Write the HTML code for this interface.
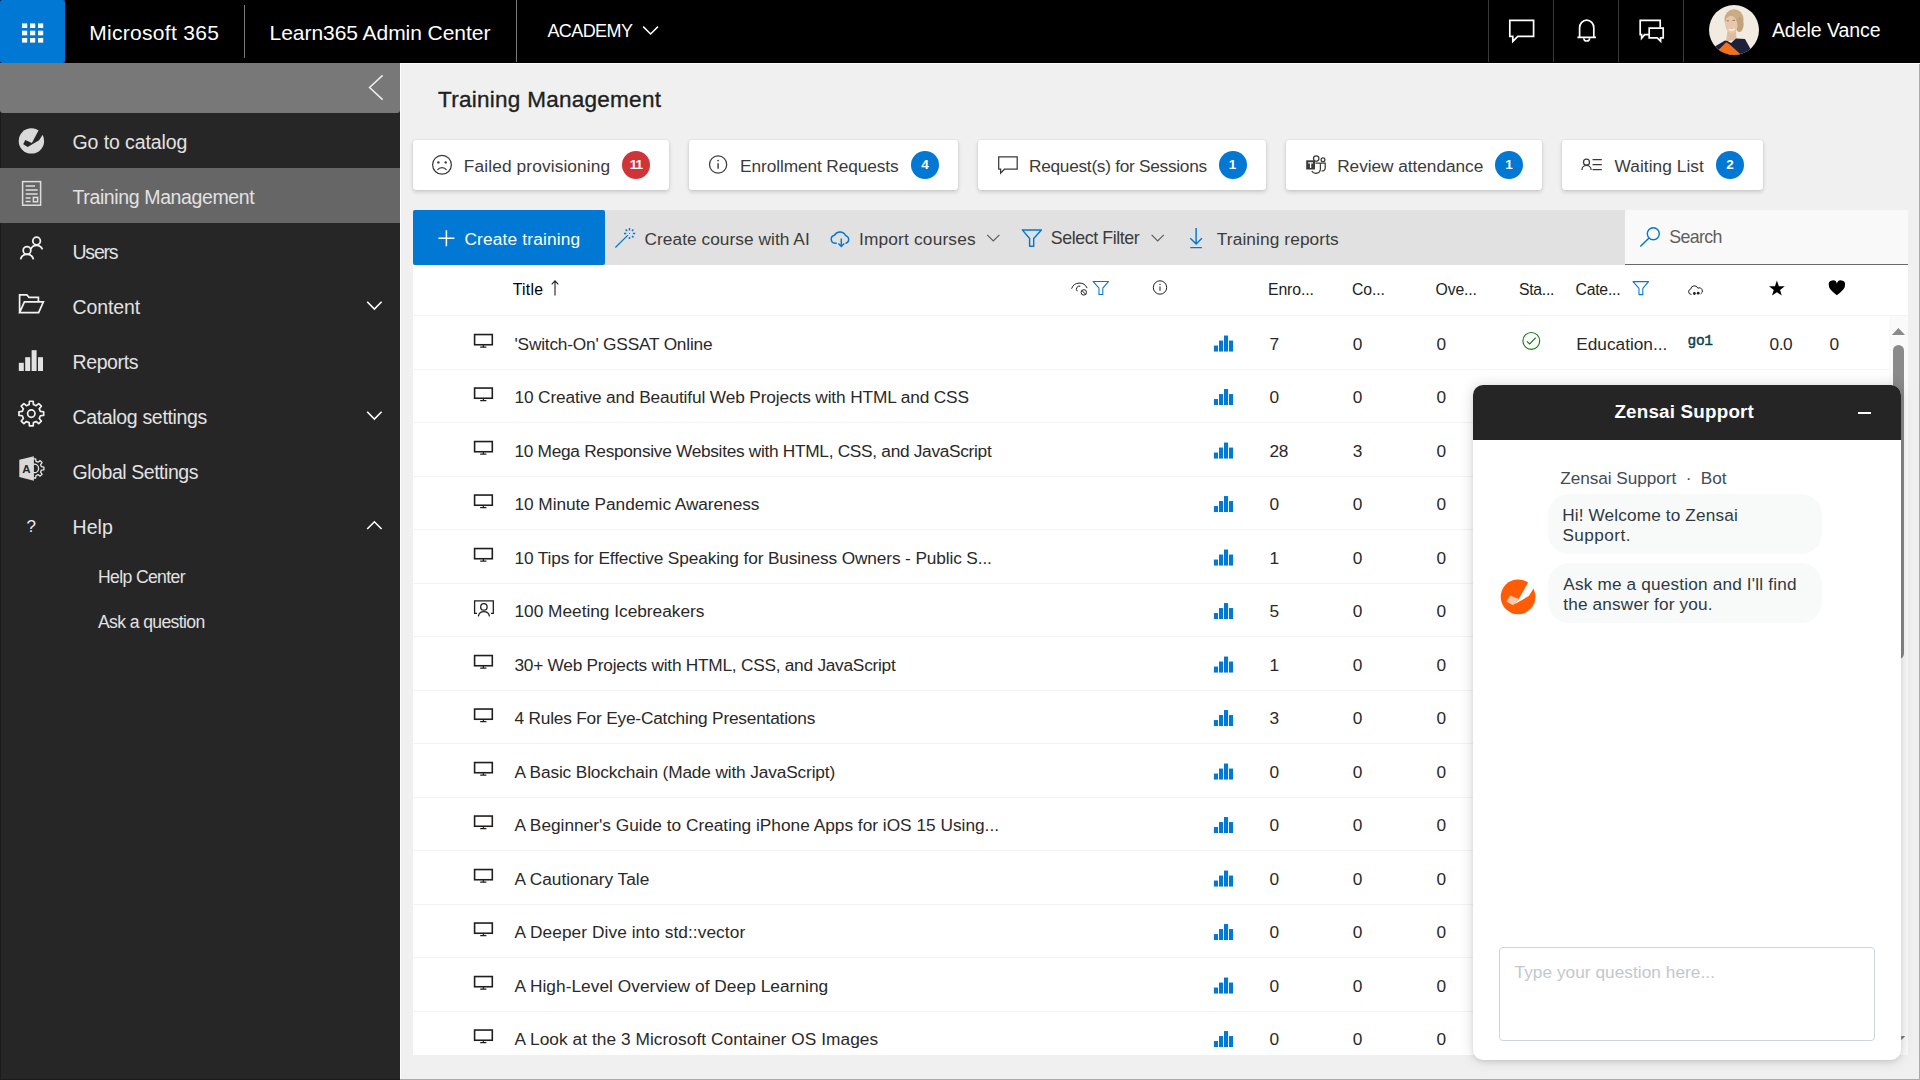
<!DOCTYPE html>
<html lang="en">
<head>
<meta charset="utf-8">
<title>Training Management - Learn365 Admin Center</title>
<style>
*{box-sizing:border-box;margin:0;padding:0}
html,body{width:1920px;height:1080px;overflow:hidden}
body{font-family:"Liberation Sans",sans-serif;background:#efefef;color:#201f1e;position:relative}
.abs{position:absolute}
svg{display:block;overflow:visible}
/* ---------- top bar ---------- */
#top{z-index:5;position:absolute;left:0;top:0;width:1920px;height:62.5px;background:#000;color:#fff}
#waffle{position:absolute;left:0;top:0;width:65px;height:62.5px;background:#0078d4;border-radius:2px}
#top .t{position:absolute;white-space:nowrap;color:#fff;line-height:1}
#top .dv{position:absolute;top:5px;width:1.3px;height:53px;background:#7a7a7a}
#top .dv2{position:absolute;top:0;width:1px;height:62px;background:#3a3a3a}
#tbl{position:absolute;left:413px;top:264.5px;width:1495px;height:790px;background:#fff}
.th{position:absolute;top:279.5px;font-size:15.8px;line-height:20px;color:#201f1e;white-space:nowrap;letter-spacing:-0.3px}
.hr{position:absolute;left:413px;width:1476px;height:1px;background:#f3f3f3}
.row{position:absolute;left:0;width:1920px;height:53.5px}
.row span{position:absolute;top:18.4px;font-size:17.3px;line-height:20px;color:#2a2928;white-space:nowrap;letter-spacing:-0.45px}
.row .rt{left:514.5px}
#sbt{position:absolute;left:1889px;top:315.5px;width:19px;height:739px;background:#fafafa}
#sbthumb{position:absolute;left:1893px;top:345px;width:11px;height:313.5px;border-radius:5.5px;background:#8a8a8a}
#chat{position:absolute;left:1473px;top:384.7px;width:428px;height:675.3px;background:#fff;border-radius:10px;box-shadow:0 0 14px rgba(0,0,0,.16),0 2px 4px rgba(0,0,0,.08);overflow:hidden}
#chh{position:absolute;left:0;top:0;width:428px;height:55.2px;background:#252525}
.ctx{position:absolute;font-size:17.2px;line-height:20px;color:#2f3941;white-space:nowrap}
.bub{position:absolute;left:1548.3px;width:273.4px;background:#f8f9f9;border-radius:21px}
#chin{position:absolute;left:1499.3px;top:946.9px;width:375.8px;height:94.6px;border:1.2px solid #cfd6da;border-radius:4px;background:#fff}
/* ---------- sidebar ---------- */
#side{position:absolute;left:0;top:0;width:400px;height:1080px;background:#262626;color:#fff;box-shadow:inset 1px 0 0 #1b1b1b,inset 0 -1px 0 #1b1b1b}
#collapse{position:absolute;left:0;top:62.5px;width:399.5px;height:50.2px;background:#787878;border-radius:0 0 3px 3px}
.nav{position:absolute;left:0;width:400px;height:55px}
.nav.sel{background:#666}
.nav .lbl{position:absolute;left:72.5px;top:2px;line-height:55px;font-size:19.5px;color:#e2e2e2;white-space:nowrap;letter-spacing:-0.55px}
.nav .ico{position:absolute;left:0;top:0}
.sub{position:absolute;left:98px;font-size:17.6px;color:#e2e2e2;white-space:nowrap;letter-spacing:-0.45px;line-height:1}
.nav .q{position:absolute;left:26.5px;top:1px;line-height:55px;font-size:17px;color:#ededed}
/* ---------- main ---------- */
#main{position:absolute;left:400px;top:0;width:1520px;height:1080px;background:#f0f0f0}
#main .edge{position:absolute;background:#fcfcfc}
#m{position:absolute;left:-400px;top:0;width:1920px;height:1080px} /* page-coordinate layer */
#title{position:absolute;left:438px;top:86.9px;font-size:22.5px;line-height:26px;color:#201f1e;-webkit-text-stroke:0.35px #201f1e;white-space:nowrap;letter-spacing:-0.5px}
.card{position:absolute;top:140px;height:50px;background:#fff;border-radius:3px;box-shadow:0 2px 4px rgba(0,0,0,.16),0 0 2px rgba(0,0,0,.10)}
.card .ct{position:absolute;top:15.6px;font-size:17.3px;line-height:20px;color:#3c3b39;white-space:nowrap;letter-spacing:-0.45px}
.badge{position:absolute;top:11px;width:28px;height:28px;border-radius:50%;background:#0078d4;color:#fff;font-weight:bold;font-size:13.5px;line-height:28px;text-align:center}
.badge.red{background:#d13438;letter-spacing:-0.8px}
#tb{position:absolute;left:413px;top:210px;width:1212px;height:54.5px;background:#e1e1e1}
#create{position:absolute;left:413px;top:210px;width:192px;height:54.5px;background:#0078d4;border-radius:2px}
.tt{position:absolute;top:228.5px;font-size:17.3px;line-height:20px;color:#3c3b39;white-space:nowrap;letter-spacing:-0.45px}
#search{position:absolute;left:1625px;top:210px;width:283px;height:55px;background:#f9f9f9;border-radius:2px 2px 0 0;border-bottom:1.5px solid #686868}
</style>
</head>
<body>
<!-- TOP BAR -->
<div id="top">
  <div id="waffle">
    <svg class="abs" style="left:22px;top:23px" width="22" height="20" viewBox="0 0 22 20" fill="#fff">
      <rect x="0" y="0.4" width="5.2" height="4.6"/><rect x="8" y="0.4" width="5.2" height="4.6"/><rect x="16" y="0.4" width="5.2" height="4.6"/>
      <rect x="0" y="7.7" width="5.2" height="4.6"/><rect x="8" y="7.7" width="5.2" height="4.6"/><rect x="16" y="7.7" width="5.2" height="4.6"/>
      <rect x="0" y="15" width="5.2" height="4.6"/><rect x="8" y="15" width="5.2" height="4.6"/><rect x="16" y="15" width="5.2" height="4.6"/>
    </svg>
  </div>
  <div class="t" id="t-ms" style="left:89.22px;top:21.5px;font-size:21px;letter-spacing:0.300px">Microsoft 365</div>
  <div class="dv" style="left:244px"></div>
  <div class="t" id="t-l365" style="left:269.59px;top:21.5px;font-size:21px;letter-spacing:-0.051px">Learn365 Admin Center</div>
  <div class="dv" style="left:516px;top:0;height:62px"></div>
  <div class="dv2" style="left:1488px"></div><div class="dv2" style="left:1553.2px"></div><div class="dv2" style="left:1618.2px"></div><div class="dv2" style="left:1683px"></div>
  <div class="t" id="t-av" style="left:1771.92px;top:21.3px;font-size:19.5px;letter-spacing:-0.040px">Adele Vance</div>
  <svg class="abs" style="left:0;top:0" width="1920" height="63" viewBox="0 0 1920 63" fill="none" stroke="#fff" stroke-width="1.7">
    <path d="M643.2 26.6l7.4 7.4 7.4-7.4" stroke-width="1.5"/>
    <!-- comment -->
    <path d="M1509.8 20.4h23.8v16h-15.8l-5 5v-5h-3z"/>
    <!-- bell -->
    <path d="M1577.4 37.4h18.6M1579.6 37.4v-9.6a7 7.6 0 0 1 14.2 0v9.6" />
    <path d="M1583.8 38.2a2.9 2.9 0 0 0 5.8 0" stroke-width="1.5"/>
    <!-- feedback -->
    <path d="M1649 34.6h-4.4l-3 3.6v-3.6h-1.4v-14.2h20v7"/>
    <path d="M1649.2 28.2h14v9.6h-2.6v3.4l-3.4-3.4h-8z"/>
  </svg>
  <!-- avatar -->
  <svg class="abs" style="left:1709px;top:5px" width="50" height="50" viewBox="0 0 50 50">
    <defs><clipPath id="avc"><circle cx="25" cy="25" r="25"/></clipPath></defs>
    <g clip-path="url(#avc)">
      <rect width="50" height="50" fill="#f2ebe1"/>
      <ellipse cx="25" cy="14.600" rx="9.600" ry="10.400" fill="#c9ab84"/>
      <ellipse cx="30.400" cy="19.500" rx="4.200" ry="7.600" fill="#c2a27c"/>
      <path d="M18.500 26h8.500l0.500 8.500-10.500 2z" fill="#dfbba0"/>
      <ellipse cx="22.300" cy="19.600" rx="6.200" ry="8.800" fill="#e8c7ad" transform="rotate(-8 22.300 19.600)"/>
      <path d="M20 24.300q2.800 2 5.600-0.600" stroke="#fbf4ee" stroke-width="1.300" fill="none"/>
      <path d="M17.600 15.800h2.400M23.400 15.400h2.600" stroke="#8c6f58" stroke-width="0.900"/>
      <path d="M5 42l11-6.500 2.500 0.500 3.500 2 5-4.500 9 0.500 5 9 2 8H0z" fill="#1e2238"/>
      <path d="M9.500 45l7.700-7.800 3 1.800 11 10-1 2H12z" fill="#f3701f"/>
    </g>
  </svg>
  <div class="t" id="t-ac" style="left:547.45px;top:22px;font-size:18px;letter-spacing:-0.594px">ACADEMY</div>
</div>

<!-- SIDEBAR -->
<div id="side">
  <div id="collapse"></div>
  <svg class="abs" style="left:0;top:0" width="400" height="1080" viewBox="0 0 400 1080" fill="none">
    <!-- collapse chevron -->
    <path d="M382.6 75.4 L369.6 87.5 L382.6 99.6" stroke="#ececec" stroke-width="1.6"/>
  </svg>
  <div class="nav" style="top:112.5px"><div class="lbl" id="n1" style=";letter-spacing:-0.101px">Go to catalog</div></div>
  <div class="nav sel" style="top:167.5px"><div class="lbl" id="n2" style=";letter-spacing:-0.376px">Training Management</div></div>
  <div class="nav" style="top:222.5px"><div class="lbl" id="n3" style=";letter-spacing:-1.219px">Users</div></div>
  <div class="nav" style="top:277.5px"><div class="lbl" id="n4" style=";letter-spacing:-0.106px">Content</div></div>
  <div class="nav" style="top:332.5px"><div class="lbl" id="n5" style=";letter-spacing:-0.394px">Reports</div></div>
  <div class="nav" style="top:387.5px"><div class="lbl" id="n6" style=";letter-spacing:-0.334px">Catalog settings</div></div>
  <div class="nav" style="top:442.5px"><div class="lbl" id="n7" style=";letter-spacing:-0.445px">Global Settings</div></div>
  <div class="nav" style="top:497.5px"><div class="lbl" id="n8" style=";letter-spacing:0.061px">Help</div><div class="q" id="nq">?</div></div>
  <div class="sub" id="s1" style="top:568.6px;letter-spacing:-0.636px">Help Center</div>
  <div class="sub" id="s2" style="top:613.6px;letter-spacing:-0.625px">Ask a question</div>
  <svg class="abs" id="sideicons" style="left:0;top:0" width="400" height="1080" viewBox="0 0 400 1080" fill="none">
    <!-- go to catalog -->
    <circle cx="31.4" cy="140.9" r="12.7" fill="#dadada"/>
    <path d="M40.8 126 L38.6 130.3 L31.9 142.9 L25.3 139.9 L23.2 144.3 L27.7 146.9 L39.1 140.3 L42.5 135.1 L45.5 130.5Z" fill="#262626"/>
    <!-- training management -->
    <g stroke="#dedede" stroke-width="1.5">
      <rect x="22.6" y="181.6" width="18" height="23.6"/>
      <path d="M25.6 186h9.4M25.6 190h12M25.6 194h12M25.6 198h5M25.6 201.6h5"/>
      <rect x="33.4" y="197.4" width="4.2" height="4.4"/>
    </g>
    <!-- users -->
    <g stroke="#f2f2f2" stroke-width="1.75">
      <circle cx="36.6" cy="241" r="3.8"/>
      <path d="M30.8 249.2a6.3 6.3 0 0 1 11.6 0.2"/>
      <circle cx="27" cy="250.4" r="3.8"/>
      <path d="M20.6 259.4a6.6 6.6 0 0 1 12.8 0"/>
    </g>
    <!-- content folder -->
    <path d="M19.6 312.6V294.8h7.2l2.2 2.6h9.4v4.4M19.6 312.6l4.8-10.8h19l-4.8 10.8z" stroke="#f2f2f2" stroke-width="1.7" stroke-linejoin="miter"/>
    <!-- reports -->
    <g fill="#e2e2e2">
      <rect x="18.8" y="362.8" width="5" height="8.2"/><rect x="25.2" y="357.2" width="5" height="13.8"/>
      <rect x="31.6" y="350.2" width="5" height="20.8"/><rect x="38" y="357.2" width="5" height="13.8"/>
    </g>
    <!-- catalog settings gear -->
    <path d="M40.34 411.43 L43.66 411.74 L43.66 415.46 L40.34 415.77 L39.23 418.46 L41.35 421.03 L38.73 423.65 L36.16 421.53 L33.47 422.64 L33.16 425.96 L29.44 425.96 L29.13 422.64 L26.44 421.53 L23.87 423.65 L21.25 421.03 L23.37 418.46 L22.26 415.77 L18.94 415.46 L18.94 411.74 L22.26 411.43 L23.37 408.74 L21.25 406.17 L23.87 403.55 L26.44 405.67 L29.13 404.56 L29.44 401.24 L33.16 401.24 L33.47 404.56 L36.16 405.67 L38.73 403.55 L41.35 406.17 L39.23 408.74Z" stroke="#f2f2f2" stroke-width="1.7" stroke-linejoin="round"/>
    <circle cx="31.3" cy="413.6" r="3.7" stroke="#f2f2f2" stroke-width="1.7"/>
    <!-- global settings -->
    <path d="M41.40 466.70 L43.90 467.03 L43.90 469.77 L41.40 470.10 L40.52 472.21 L42.06 474.22 L40.12 476.16 L38.11 474.62 L36.00 475.50 L35.67 478.00 L32.93 478.00 L32.60 475.50 L30.49 474.62 L28.48 476.16 L26.54 474.22 L28.08 472.21 L27.20 470.10 L24.70 469.77 L24.70 467.03 L27.20 466.70 L28.08 464.59 L26.54 462.58 L28.48 460.64 L30.49 462.18 L32.60 461.30 L32.93 458.80 L35.67 458.80 L36.00 461.30 L38.11 462.18 L40.12 460.64 L42.06 462.58 L40.52 464.59Z" stroke="#e8e8e8" stroke-width="1.3" stroke-linejoin="round"/>
    <circle cx="34.3" cy="468.4" r="4.3" stroke="#e8e8e8" stroke-width="1.3"/>
    <path d="M19.3 459.8 L33.9 456.2 V480.7 L19.3 477Z" fill="#d9d9d9"/>
    <text x="22.3" y="472.7" font-family="Liberation Sans, sans-serif" font-weight="bold" font-size="11.5" fill="#262626">A</text>
    <!-- nav chevrons -->
    <g stroke="#fff" stroke-width="1.6">
      <path d="M367.2 301.8l7.2 7.2 7.2-7.2"/>
      <path d="M367.2 411.8l7.2 7.2 7.2-7.2"/>
      <path d="M367.2 529l7.2-7.2 7.2 7.2"/>
    </g>
  </svg>
</div>

<!-- MAIN -->
<div id="main">
 <div class="edge" style="left:0;top:62.5px;width:1px;height:1018px"></div>
 <div class="edge" style="left:0;top:62.5px;width:1520px;height:1px"></div>
 <div class="edge" style="left:1519px;top:63.5px;width:1px;height:1017px;background:#aaa"></div>
 <div class="edge" style="left:0;top:1079px;width:1520px;height:1px;background:#aaa"></div>
 <div id="m">
  <div id="title" style=";letter-spacing:0.271px">Training Management</div>
  <!-- cards -->
  <div class="card" style="left:413px;width:256px"><div class="ct" id="c1" style="left:50.87px;letter-spacing:0.121px">Failed provisioning</div><div class="badge red" style="left:209px">11</div></div>
  <div class="card" style="left:689px;width:269px"><div class="ct" id="c2" style="left:51.05px;letter-spacing:-0.099px">Enrollment Requests</div><div class="badge" style="left:222px">4</div></div>
  <div class="card" style="left:978px;width:288px"><div class="ct" id="c3" style="left:51.04px;letter-spacing:-0.288px">Request(s) for Sessions</div><div class="badge" style="left:240.5px">1</div></div>
  <div class="card" style="left:1286px;width:256px"><div class="ct" id="c4" style="left:51.19px;letter-spacing:-0.056px">Review attendance</div><div class="badge" style="left:209px">1</div></div>
  <div class="card" style="left:1562px;width:201px"><div class="ct" id="c5" style="left:52.50px;letter-spacing:0.059px">Waiting List</div><div class="badge" style="left:154px">2</div></div>
  <!-- toolbar -->
  <div id="tb"></div>
  <div id="create"></div>
  <div class="tt" id="b1" style="left:464.42px;color:#fff;letter-spacing:0.168px">Create training</div>
  <div class="tt" id="b2" style="left:644.50px;letter-spacing:0.049px">Create course with AI</div>
  <div class="tt" id="b3" style="left:858.97px;letter-spacing:0.182px">Import courses</div>
  <div class="tt" id="b4" style="left:1050.73px;top:228px;font-size:17.8px;letter-spacing:-0.401px">Select Filter</div>
  <div class="tt" id="b5" style="left:1216.83px;letter-spacing:0.099px">Training reports</div>
  <div id="search"></div>
  <div class="tt" id="b6" style="left:1669.33px;top:227.2px;color:#605e5c;font-size:17.8px;letter-spacing:-0.647px">Search</div>
  <div id="tbl"></div>
  <div class="th" id="h1" style="left:512.74px;color:#000;letter-spacing:0.277px">Title</div>
  <div class="th" id="h2" style="left:1268.03px;letter-spacing:-0.112px">Enro...</div>
  <div class="th" id="h3" style="left:1351.99px;letter-spacing:-0.119px">Co...</div>
  <div class="th" id="h4" style="left:1435.56px;letter-spacing:-0.141px">Ove...</div>
  <div class="th" id="h5" style="left:1519.00px;letter-spacing:-0.297px">Sta...</div>
  <div class="th" id="h6" style="left:1575.48px;letter-spacing:-0.230px">Cate...</div>
  <div class="hr" style="top:315px;width:1495px"></div>
  <div class="hr" style="top:369px"></div>
  <div class="hr" style="top:422px"></div>
  <div class="hr" style="top:476px"></div>
  <div class="hr" style="top:529px"></div>
  <div class="hr" style="top:583px"></div>
  <div class="hr" style="top:636px"></div>
  <div class="hr" style="top:690px"></div>
  <div class="hr" style="top:743px"></div>
  <div class="hr" style="top:797px"></div>
  <div class="hr" style="top:850px"></div>
  <div class="hr" style="top:904px"></div>
  <div class="hr" style="top:957px"></div>
  <div class="hr" style="top:1011px"></div>
  <div class="row" style="top:315.15px"><span class="rt" id="r1" style=";letter-spacing:-0.209px">'Switch-On' GSSAT Online</span><span class="n" style="left:1269.5px">7</span><span class="n" style="left:1352.8px">0</span><span class="n" style="left:1436.5px">0</span></div>
  <div class="row" style="top:368.65px"><span class="rt" id="r2" style=";letter-spacing:-0.136px">10 Creative and Beautiful Web Projects with HTML and CSS</span><span class="n" style="left:1269.5px">0</span><span class="n" style="left:1352.8px">0</span><span class="n" style="left:1436.5px">0</span></div>
  <div class="row" style="top:422.15px"><span class="rt" id="r3" style=";letter-spacing:-0.300px">10 Mega Responsive Websites with HTML, CSS, and JavaScript</span><span class="n" style="left:1269.5px">28</span><span class="n" style="left:1352.8px">3</span><span class="n" style="left:1436.5px">0</span></div>
  <div class="row" style="top:475.65px"><span class="rt" id="r4" style=";letter-spacing:-0.060px">10 Minute Pandemic Awareness</span><span class="n" style="left:1269.5px">0</span><span class="n" style="left:1352.8px">0</span><span class="n" style="left:1436.5px">0</span></div>
  <div class="row" style="top:529.15px"><span class="rt" id="r5" style=";letter-spacing:-0.132px">10 Tips for Effective Speaking for Business Owners - Public S...</span><span class="n" style="left:1269.5px">1</span><span class="n" style="left:1352.8px">0</span><span class="n" style="left:1436.5px">0</span></div>
  <div class="row" style="top:582.65px"><span class="rt" id="r6" style=";letter-spacing:-0.013px">100 Meeting Icebreakers</span><span class="n" style="left:1269.5px">5</span><span class="n" style="left:1352.8px">0</span><span class="n" style="left:1436.5px">0</span></div>
  <div class="row" style="top:636.15px"><span class="rt" id="r7" style=";letter-spacing:-0.255px">30+ Web Projects with HTML, CSS, and JavaScript</span><span class="n" style="left:1269.5px">1</span><span class="n" style="left:1352.8px">0</span><span class="n" style="left:1436.5px">0</span></div>
  <div class="row" style="top:689.65px"><span class="rt" id="r8" style=";letter-spacing:-0.204px">4 Rules For Eye-Catching Presentations</span><span class="n" style="left:1269.5px">3</span><span class="n" style="left:1352.8px">0</span><span class="n" style="left:1436.5px">0</span></div>
  <div class="row" style="top:743.15px"><span class="rt" id="r9" style=";letter-spacing:-0.146px">A Basic Blockchain (Made with JavaScript)</span><span class="n" style="left:1269.5px">0</span><span class="n" style="left:1352.8px">0</span><span class="n" style="left:1436.5px">0</span></div>
  <div class="row" style="top:796.65px"><span class="rt" id="r10" style=";letter-spacing:-0.001px">A Beginner's Guide to Creating iPhone Apps for iOS 15 Using...</span><span class="n" style="left:1269.5px">0</span><span class="n" style="left:1352.8px">0</span><span class="n" style="left:1436.5px">0</span></div>
  <div class="row" style="top:850.15px"><span class="rt" id="r11" style=";letter-spacing:-0.024px">A Cautionary Tale</span><span class="n" style="left:1269.5px">0</span><span class="n" style="left:1352.8px">0</span><span class="n" style="left:1436.5px">0</span></div>
  <div class="row" style="top:903.65px"><span class="rt" id="r12" style=";letter-spacing:0.070px">A Deeper Dive into std::vector</span><span class="n" style="left:1269.5px">0</span><span class="n" style="left:1352.8px">0</span><span class="n" style="left:1436.5px">0</span></div>
  <div class="row" style="top:957.15px"><span class="rt" id="r13" style=";letter-spacing:0.040px">A High-Level Overview of Deep Learning</span><span class="n" style="left:1269.5px">0</span><span class="n" style="left:1352.8px">0</span><span class="n" style="left:1436.5px">0</span></div>
  <div class="row" style="top:1010.65px"><span class="rt" id="r14" style=";letter-spacing:0.057px">A Look at the 3 Microsoft Container OS Images</span><span class="n" style="left:1269.5px">0</span><span class="n" style="left:1352.8px">0</span><span class="n" style="left:1436.5px">0</span></div>
  <div class="row" style="top:315.15px"><span class="n" id="ed" style="left:1576.20px;letter-spacing:-0.012px">Education...</span><span class="n" style="left:1769.5px">0.0</span><span class="n" style="left:1829.5px">0</span></div>
  <div id="sbt"></div><div id="sbthumb"></div>
  <!--TABLE-->
  <div id="chat">
   <div id="chh"></div>
  </div>
  <div class="ctx" id="ch-t" style="left:1614.44px;top:400.5px;font-size:18.8px;font-weight:bold;color:#fff;line-height:22px;letter-spacing:0.209px">Zensai Support</div>
  <div class="abs" style="left:1857.5px;top:411.6px;width:13px;height:2.4px;background:#fff"></div>
  <div class="ctx" id="ch-l" style="left:1560.29px;top:467.5px;color:#414c54;letter-spacing:-0.042px">Zensai Support&nbsp; ·&nbsp; Bot</div>
  <div class="bub" style="top:494px;height:60px"></div>
  <div class="bub" style="top:563.3px;height:60px"></div>
  <div class="ctx" id="ch-m1" style="left:1562.14px;top:505.3px;letter-spacing:0.151px">Hi! Welcome to Zensai</div>
  <div class="ctx" id="ch-m1b" style="left:1562.48px;top:525.3px;letter-spacing:0.436px">Support.</div>
  <div class="ctx" id="ch-m2" style="left:1563.28px;top:573.5px;letter-spacing:0.180px">Ask me a question and I'll find</div>
  <div class="ctx" id="ch-m2b" style="left:1563.27px;top:593.6px;letter-spacing:0.171px">the answer for you.</div>
  <div id="chin"></div>
  <div class="ctx" id="ch-ph" style="left:1514.52px;top:962px;color:#c2c8cc;letter-spacing:0.067px">Type your question here...</div>
  <svg class="abs" style="left:0;top:0" width="1920" height="1080" viewBox="0 0 1920 1080">
    <circle cx="1518.1" cy="596.8" r="17.4" fill="#ff5c05"/>
    <path d="M1530.6 577.8 L1528.1 582.4 L1518.8 598.9 L1514.9 603.9 L1528.8 596.1 L1533.4 588.7 L1537.5 582Z" fill="#fff"/>
    <path d="M1510.3 595.6 L1518.8 598.9 L1514.9 603.9 L1512.6 605 L1506.3 601.6Z" fill="#ffc9ad"/>
  </svg>
  <!--CHAT-->
  <svg class="abs" id="icons" style="left:0;top:0" width="1920" height="1080" viewBox="0 0 1920 1080" fill="none">
  <defs>
  <g id="mon" stroke="#201f1e" stroke-width="1.6"><rect x="474.6" y="19.7" width="17.7" height="10.2"/><path d="M483.4 30v2.2M480.2 32.3h6.2" stroke-width="1.2"/></g>
  <g id="bars" fill="#0078d4"><rect x="1213.9" y="30.6" width="4.1" height="6"/><rect x="1219" y="25.6" width="4.1" height="11"/><rect x="1224" y="20.6" width="4.1" height="16"/><rect x="1229" y="25.6" width="4.1" height="11"/></g>
  </defs>
  <!-- card icons -->
  <g stroke="#3b3a39" stroke-width="1.25">
  <circle cx="442" cy="164.8" r="9.4"/><path d="M437.4 170a5.6 5.6 0 0 1 9.2 0"/>
  <circle cx="438.4" cy="162.4" r="1.2" fill="#3b3a39" stroke="none"/><circle cx="445.7" cy="162.4" r="1.2" fill="#3b3a39" stroke="none"/>
  <circle cx="718.1" cy="164.5" r="8.6"/><path d="M718.1 163.2v5.6" stroke-width="1.4"/><circle cx="718.1" cy="160.6" r="0.9" fill="#3b3a39" stroke="none"/>
  <path d="M998.7 156.8h18.5v12.4h-12.8l-3.8 4v-4h-1.9z"/>
  <circle cx="1316.2" cy="158.6" r="2.7"/><circle cx="1323" cy="159.7" r="1.9"/>
  <path d="M1315.4 163.1h9.8v5.2a3 3 0 0 1-3.6 2.600"/><path d="M1320.4 163.4v5.600a4.600 4.600 0 0 1-8.600 2"/>
  <rect x="1306.200" y="160.300" width="8.800" height="9.200" fill="#3b3a39" stroke="none"/><path d="M1308.200 162.900h4.800M1310.600 162.900v5" stroke="#fff" stroke-width="1.300"/>
  <circle cx="1586.500" cy="162.200" r="3"/><path d="M1581.900 170a4.600 4.600 0 0 1 9.200 0"/><path d="M1592.500 159.500h9.300M1592.500 164.500h9.300M1592.500 169.500h9.300"/>
  </g>
  <!-- toolbar icons -->
  <path d="M438.400 238.250h16M446.400 230.250v16" stroke="#fff" stroke-width="1.500"/>
  <g stroke="#0078d4" stroke-width="1.450">
  <path d="M615.400 247.500l12.500-12.400" stroke-width="1.250"/><path d="M629.500 228v2.400M629.500 237v1.900M624 233.400h2.300M632.900 233.400h2.300M625.600 229.600l1.500 1.500M633.400 229.600l-1.500 1.500M632 235.900l1.500 1.500"/><circle cx="629.500" cy="233.400" r="0.600" fill="#0078d4" stroke="none"/>
  <path d="M836.800 243.200H835a4 4 0 0 1-0.600-7.900a6.300 6.300 0 0 1 11.200 0.300a4 4 0 0 1 0.600 7.600h-0.800"/><path d="M841.300 238.400v7.800M838.400 243.500l2.900 2.900 2.900-2.900"/>
  <path d="M1022.300 229.900h19.100l-7.700 8.600v7.800h-4.100v-7.800z" stroke-linejoin="round"/>
  <path d="M1196.100 228v15.600M1190.300 238.200l5.800 5.700 5.800-5.700M1190.300 247.600h11.600"/>
  <circle cx="1653.300" cy="233.700" r="6"/><path d="M1649 238l-8.700 8.600"/>
  </g>
  <g stroke="#605e5c" stroke-width="1.200"><path d="M987.200 234.800l6.100 6.100 6.100-6.100M1151.600 234.800l6.100 6.100 6.100-6.100"/></g>
  <!-- header icons -->
  <path d="M555 295.500v-14.600M551.700 284.300l3.300-3.500 3.300 3.500" stroke="#201f1e" stroke-width="1.100"/>
  <g stroke="#201f1e" stroke-width="1.000"><path d="M1071.600 288.700a8.300 8.300 0 0 1 15.500-0.600"/><path d="M1080.300 286.200a3 3 0 0 0-3 5"/><circle cx="1083.800" cy="292.400" r="2.700"/><path d="M1081.900 290.500l3.800 3.800"/>
  <circle cx="1160" cy="287.500" r="6.700"/><path d="M1160 286.400v4.400"/><circle cx="1160" cy="284.400" r="0.700" fill="#201f1e" stroke="none"/>
  <path d="M1691.400 294.400h-0.400a2.700 2.700 0 0 1-0.300-5.300a3.700 3.700 0 0 1 7.100-1a3.200 3.200 0 0 1 2.800 5.800" /><circle cx="1694.400" cy="293.500" r="1.400" fill="#201f1e" stroke="none"/><circle cx="1698.200" cy="293.200" r="1.400" fill="#201f1e" stroke="none"/></g>
  <g stroke="#0078d4" stroke-width="1.050" stroke-linejoin="round"><path d="M1093 281.400h15.600l-5.800 6.800v6.400h-3.800v-6.400z"/><path d="M1633 281.600h15.600l-5.800 6.800v6.200h-3.800v-6.200z"/></g>
  <path d="M1776.90 280.60 L1778.84 286.23 L1784.79 286.34 L1780.04 289.92 L1781.78 295.61 L1776.90 292.20 L1772.02 295.61 L1773.76 289.92 L1769.01 286.34 L1774.96 286.23Z" fill="#000"/>
  <path d="M1836.900 295.200c-3-2.400-8.100-6-8.100-10a4.100 4.100 0 0 1 8.100-1.500a4.100 4.100 0 0 1 8.100 1.500c0 4-5.100 7.600-8.100 10z" fill="#000"/>
  <!-- row icons -->
  <use href="#mon" y="314.85"/>
  <use href="#bars" y="314.95"/>
  <use href="#mon" y="368.35"/>
  <use href="#bars" y="368.45"/>
  <use href="#mon" y="421.85"/>
  <use href="#bars" y="421.95"/>
  <use href="#mon" y="475.35"/>
  <use href="#bars" y="475.45"/>
  <use href="#mon" y="528.85"/>
  <use href="#bars" y="528.95"/>
  <use href="#bars" y="582.45"/>
  <use href="#mon" y="635.85"/>
  <use href="#bars" y="635.95"/>
  <use href="#mon" y="689.35"/>
  <use href="#bars" y="689.45"/>
  <use href="#mon" y="742.85"/>
  <use href="#bars" y="742.95"/>
  <use href="#mon" y="796.35"/>
  <use href="#bars" y="796.45"/>
  <use href="#mon" y="849.85"/>
  <use href="#bars" y="849.95"/>
  <use href="#mon" y="903.35"/>
  <use href="#bars" y="903.45"/>
  <use href="#mon" y="956.85"/>
  <use href="#bars" y="956.95"/>
  <use href="#mon" y="1010.35"/>
  <use href="#bars" y="1010.45"/>
  <g stroke="#201f1e" stroke-width="1.300" transform="translate(0 -0.40)"><path d="M477 613.700h-2.400v-12.400h18.700v12.400h-2.400"/><circle cx="483.900" cy="607.300" r="3.200"/><path d="M478.300 616.700a5.700 5.700 0 0 1 11.200 0"/></g>
  <g stroke="#107c10" stroke-width="1.150"><circle cx="1531.300" cy="340.900" r="8.400"/><path d="M1526.900 341.300l2.800 2.700 6-6.300"/></g>
  <path d="M1898.400 328l6.600 6.900h-13.200z" fill="#8a8a8a"/><path d="M1901.200 1036H1905.200L1901.200 1040.200z" fill="#6e6e6e"/>
  </svg>
  <div class="abs" id="go1" style="left:1687.500px;top:332.500px;font-family:'Liberation Mono',monospace;font-size:14.500px;line-height:16px;color:#0d3f4f;letter-spacing:-0.300px;-webkit-text-stroke:0.45px #0d3f4f">go1</div>
  <!--ICONS-->
 </div>
</div>
</body>
</html>
